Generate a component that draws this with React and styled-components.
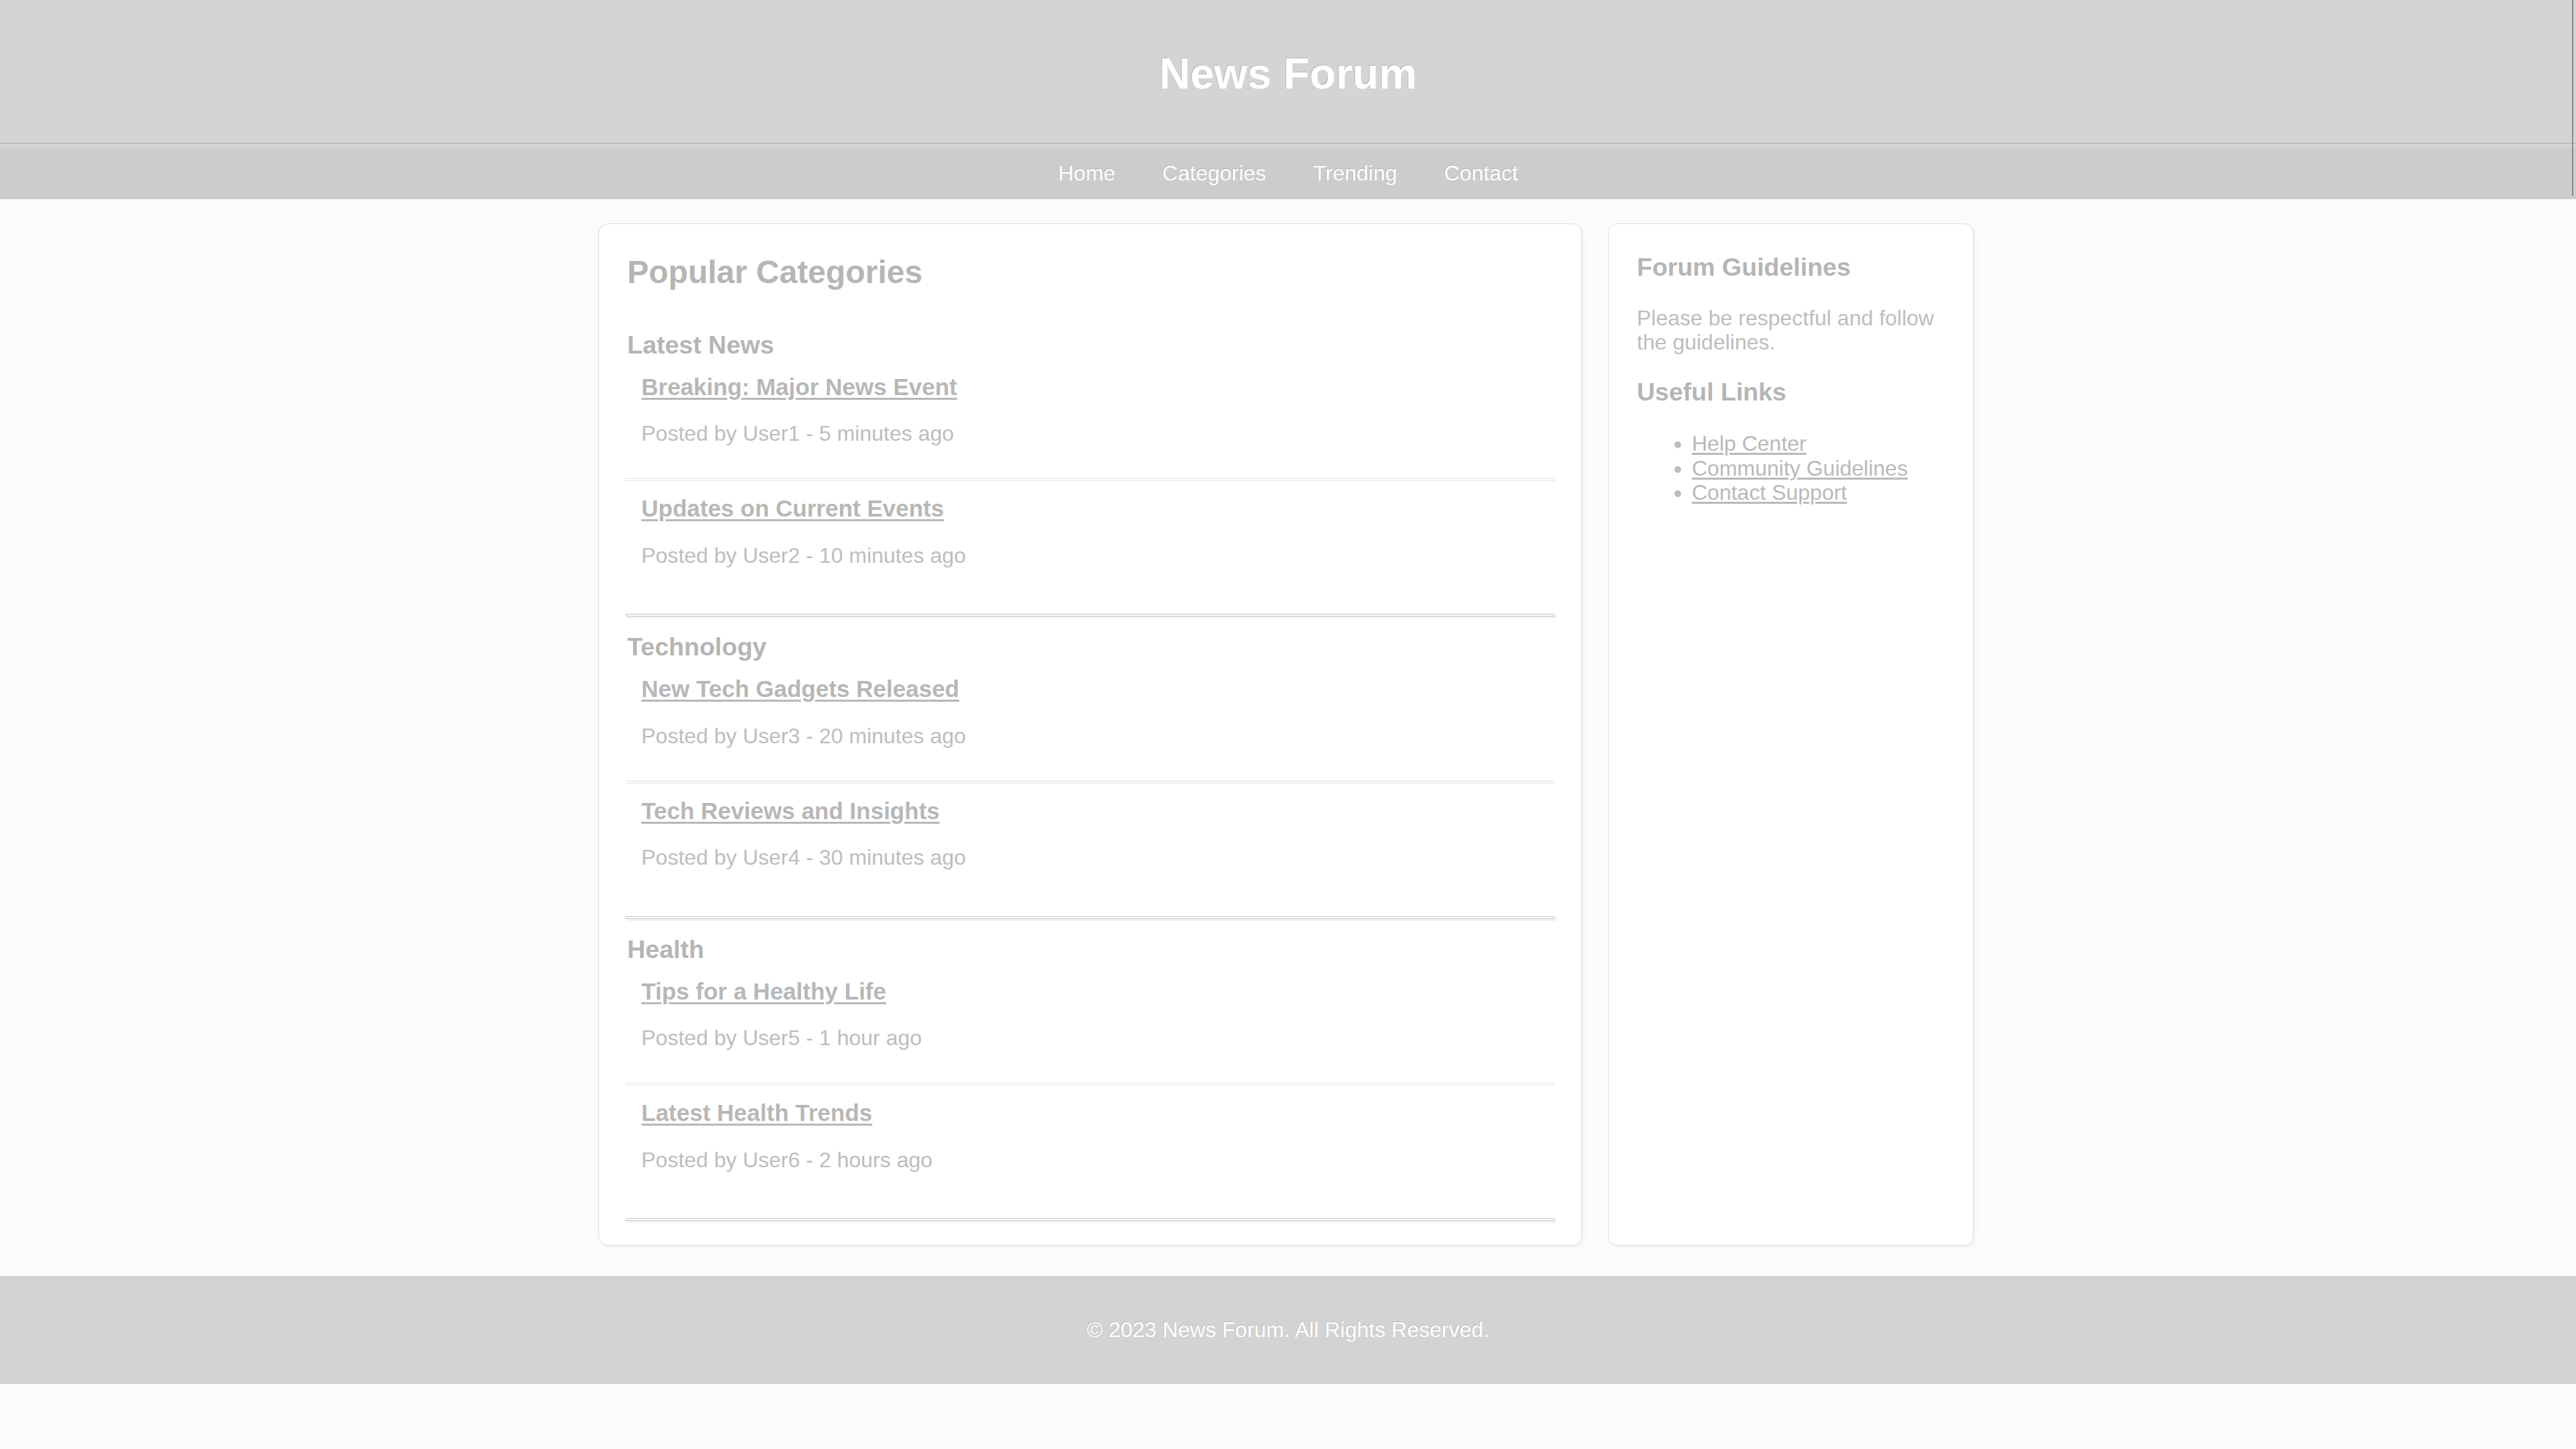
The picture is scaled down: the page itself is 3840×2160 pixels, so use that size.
import styled, { createGlobalStyle } from 'styled-components';

const GlobalStyle = createGlobalStyle`
  html, body {
    margin: 0;
    padding: 0;
    background: #fbfbfb;
    font-family: "Liberation Sans", Arial, sans-serif;
  }
  * {
    box-sizing: border-box;
  }
`;

const categories = [
  {
    name: 'Latest News',
    posts: [
      { title: 'Breaking: Major News Event', user: 'User1', time: '5 minutes ago' },
      { title: 'Updates on Current Events', user: 'User2', time: '10 minutes ago' }
    ]
  },
  {
    name: 'Technology',
    posts: [
      { title: 'New Tech Gadgets Released', user: 'User3', time: '20 minutes ago' },
      { title: 'Tech Reviews and Insights', user: 'User4', time: '30 minutes ago' }
    ]
  },
  {
    name: 'Health',
    posts: [
      { title: 'Tips for a Healthy Life', user: 'User5', time: '1 hour ago' },
      { title: 'Latest Health Trends', user: 'User6', time: '2 hours ago' }
    ]
  }
];

const links = ['Help Center', 'Community Guidelines', 'Contact Support'];

function App() {
  return (
    <>
      <GlobalStyle />
      <TopBar>
        <Header>
          <Title>News Forum</Title>
        </Header>
        <Nav>
          <NavLink href="#">Home</NavLink>
          <NavLink href="#">Categories</NavLink>
          <NavLink href="#">Trending</NavLink>
          <NavLink href="#">Contact</NavLink>
        </Nav>
      </TopBar>
      <Main>
        <Card>
          <PageHeading>Popular Categories</PageHeading>
          {categories.map((cat) => (
            <Category key={cat.name}>
              <SectionHeading>{cat.name}</SectionHeading>
              {cat.posts.map((post) => (
                <Post key={post.title}>
                  <PostTitle href="#">{post.title}</PostTitle>
                  <PostMeta>Posted by {post.user} - {post.time}</PostMeta>
                </Post>
              ))}
              <Separator />
            </Category>
          ))}
        </Card>
        <Sidebar>
          <SectionHeading>Forum Guidelines</SectionHeading>
          <SideText>Please be respectful and follow the guidelines.</SideText>
          <SectionHeading>Useful Links</SectionHeading>
          <LinkList>
            {links.map((l) => (
              <li key={l}>
                <SideLink href="#">{l}</SideLink>
              </li>
            ))}
          </LinkList>
        </Sidebar>
      </Main>
      <Footer>© 2023 News Forum. All Rights Reserved.</Footer>
    </>
  );
}

export default App;

const TopBar = styled.div`
  position: relative;
  &::after {
    content: '';
    position: absolute;
    top: 0;
    right: 4px;
    width: 2px;
    height: 292px;
    background: #8c8c8c;
  }
`;

const Header = styled.header`
  height: 214px;
  padding-top: 7px;
  background: #d4d4d4;
  border-bottom: 1px solid #a9a9a9;
  display: flex;
  align-items: center;
  justify-content: center;
`;

const Title = styled.h1`
  margin: 0;
  font-size: 64px;
  line-height: 74px;
  font-weight: bold;
  color: #ffffff;
  text-shadow: -1px -1px 0 rgba(0, 0, 0, 0.14);
`;

const Nav = styled.nav`
  height: 83px;
  background: #cccccc;
  border-top: 6px solid #d4d4d4;
  display: flex;
  align-items: center;
  justify-content: center;
  gap: 70px;
`;

const NavLink = styled.a`
  color: #ffffff;
  font-size: 32px;
  line-height: 37px;
  text-decoration: none;
  text-shadow: -1px -1px 0 rgba(0, 0, 0, 0.12);
`;

const Main = styled.main`
  display: flex;
  justify-content: center;
  align-items: stretch;
  gap: 39px;
  padding: 36px 6px 45px 0;
`;

const Card = styled.section`
  flex: 0 0 1466px;
  background: #ffffff;
  border: 1px solid #dcdcdc;
  border-radius: 14px;
  box-shadow: 4px 4px 4px rgba(0, 0, 0, 0.03);
  padding: 44px 39px 12px;
`;

const PageHeading = styled.h2`
  margin: 0 0 59.5px;
  padding-left: 3px;
  font-size: 48px;
  line-height: 55.2px;
  font-weight: bold;
  color: #b5b5b5;
`;

const Category = styled.div`
  margin-bottom: 24px;
`;

const SectionHeading = styled.h3`
  margin: 0;
  padding-left: 3px;
  font-size: 37.5px;
  line-height: 43.1px;
  font-weight: bold;
  color: #b5b5b5;
`;

const Post = styled.div`
  padding: 21px 24px 48.5px;
  border-bottom: 4px double #e3e3e3;

  &:last-of-type {
    border-bottom: none;
    padding-bottom: 52.5px;
  }
`;

const PostTitle = styled.a`
  display: block;
  font-size: 35px;
  line-height: 40.25px;
  font-weight: bold;
  color: #b7b7b7;
  text-decoration: underline;
  text-decoration-thickness: 3px;
  text-underline-offset: 4px;
`;

const PostMeta = styled.p`
  margin: 31px 0 0;
  font-size: 32px;
  line-height: 36.8px;
  color: #bdbdbd;
`;

const Separator = styled.hr`
  margin: 16.3px 0 0;
  height: 4px;
  border: 1px solid #c4c4c4;
  border-radius: 2px;
  background: #ffffff;
  box-shadow: 3px 3px 0 #f2f2f2;
`;

const Sidebar = styled.aside`
  flex: 0 0 545px;
  background: #ffffff;
  border: 1px solid #dcdcdc;
  border-radius: 14px;
  box-shadow: 4px 4px 4px rgba(0, 0, 0, 0.03);
  padding: 42.5px 41px 40px 42px;

  h3 {
    padding-left: 0;
    margin-bottom: 36px;
  }
  h3 + ul {
    margin-top: 37px;
  }
`;

const SideText = styled.p`
  margin: 0 0 33.5px;
  font-size: 32px;
  line-height: 36.8px;
  color: #bdbdbd;
`;

const LinkList = styled.ul`
  margin: 0;
  padding-left: 82px;
  font-size: 32px;
  line-height: 36.8px;
  color: #bdbdbd;
`;

const SideLink = styled.a`
  color: #b9b9b9;
  text-decoration: underline;
  text-underline-offset: 3px;
`;

const Footer = styled.footer`
  height: 161px;
  background: #d3d3d3;
  display: flex;
  align-items: center;
  justify-content: center;
  color: #ffffff;
  font-size: 32px;
  line-height: 37px;
  text-shadow: -1px -1px 0 rgba(0, 0, 0, 0.12);
`;
